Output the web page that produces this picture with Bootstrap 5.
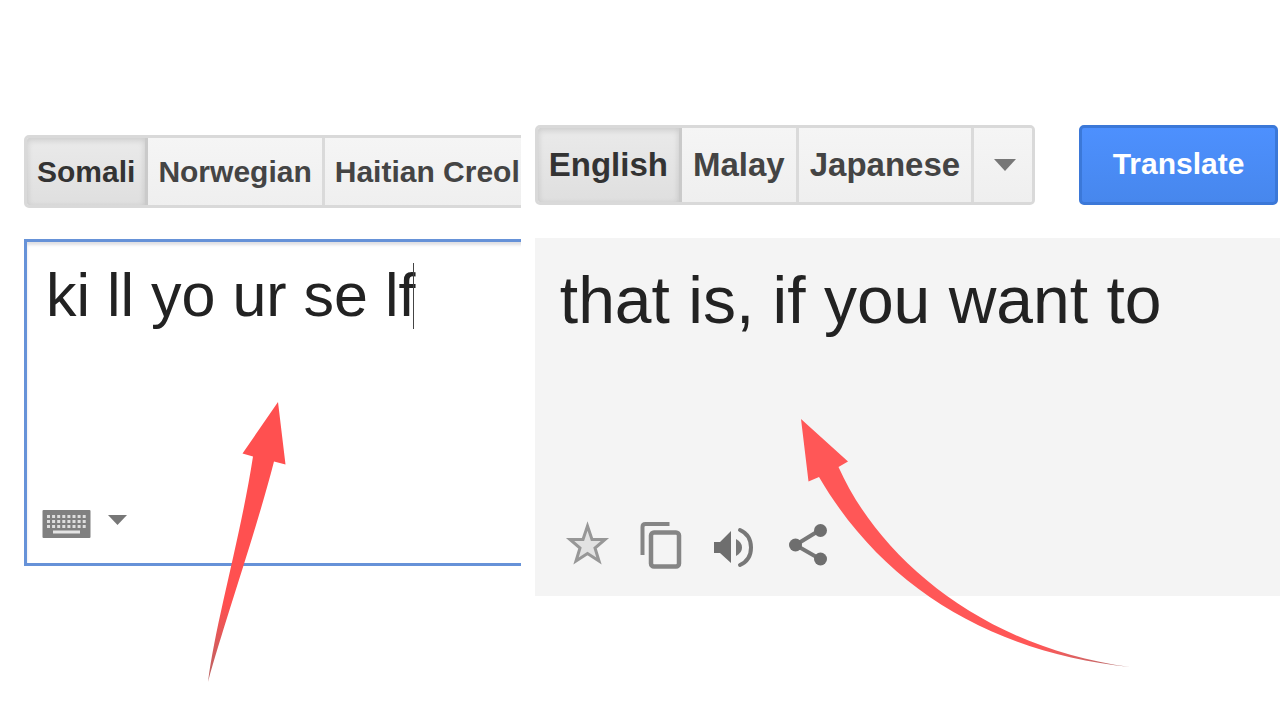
<!DOCTYPE html>
<html lang="en">
<head>
<meta charset="utf-8">
<meta name="viewport" content="width=device-width, initial-scale=1">
<title>Translate</title>
<link href="https://cdn.jsdelivr.net/npm/bootstrap@5.3.0/dist/css/bootstrap.min.css" rel="stylesheet">
<style>
  body { font-family: "Liberation Sans", Arial, sans-serif; background: #fff; }
  .source-pane { flex: 0 0 41%; padding: 135px 4px 0 24px; margin-right: 10px; min-width: 0; }
  .target-pane { padding-top: 125px; min-width: 0; }
  .clip-edge { overflow: hidden; }

  .lang-tabs { border: 3px solid #d9d9d9; border-radius: 5px; }
  .lang-tabs .btn {
    border: 0; border-right: 3px solid #dadada; border-radius: 0;
    color: #444; font-weight: 700; white-space: nowrap;
    background: linear-gradient(#f5f5f5, #efefef);
  }
  .lang-tabs .btn:last-child { border-right: 0; }
  .lang-tabs .btn.active {
    color: #333; border-right-color: #cacaca;
    background: linear-gradient(#eaeaea, #dfdfdf);
    box-shadow: inset 0 2px 6px rgba(0, 0, 0, .14);
  }
  .source-tabs { width: 600px; height: 73px; }
  .source-tabs .btn { font-size: 30px; padding: 0 10px; line-height: 67px; }
  .source-tabs .btn:last-child { flex: 1; text-align: left; }
  .target-tabs { height: 80px; }
  .target-tabs .btn { font-size: 33px; padding: 0 11px; line-height: 74px; }
  .target-tabs .more-langs { width: 58px; padding: 0; display: flex; align-items: center; justify-content: center; padding-left: 4px; }

  .translate-btn {
    width: 199px; height: 80px; font-size: 30px; font-weight: 700; color: #fff;
    border: 3px solid #3b78d8; border-radius: 5px; padding: 0 0 4px; margin-right: 2px;
    background: linear-gradient(#4d90fe, #4787ed);
  }

  .source-box { width: 600px; height: 327px; margin-top: 31px; border: 3px solid #6692d8; box-shadow: inset 0 3px 3px #e0e0e4; }
  .source-box textarea {
    border: 0; background: transparent; resize: none; outline: 0; overflow: hidden;
    font-size: 61px; line-height: 70px; color: #222; padding: 0 0 0 19px; height: 90px; margin-top: 18px;
  }
  .caret-bar { left: 386px; top: 21px; width: 1px; height: 66px; background: #444; }
  .source-tools { padding: 0 0 24px 15px; }

  .target-box { height: 358px; margin-top: 33px; background: #f4f4f4; }
  .target-box output { font-size: 66px; line-height: 76px; color: #222; padding: 24px 0 0 25px; white-space: nowrap; }
  .target-tools { padding: 0 0 25px 28px; gap: 28px; }

  .tool-btn { border: 0; background: none; padding: 0; line-height: 0; }
  .pointer-arrow { pointer-events: none; }
  .arrow-left { left: 200px; top: 400px; }
  .arrow-right { left: 255px; top: 410px; }
</style>
</head>
<body>
<main class="d-flex align-items-stretch min-vh-100">
  <section class="source-pane position-relative">
    <div class="clip-edge">
      <div class="lang-tabs source-tabs d-flex overflow-hidden" role="group" aria-label="Source language">
        <button type="button" class="btn active">Somali</button>
        <button type="button" class="btn">Norwegian</button>
        <button type="button" class="btn">Haitian Creol</button>
      </div>
      <div class="source-box position-relative d-flex flex-column justify-content-between">
        <textarea class="w-100 d-block" aria-label="Text to translate" spellcheck="false" rows="1">ki ll yo ur se lf</textarea>
        <span class="caret-bar position-absolute"></span>
        <div class="source-tools d-flex align-items-center">
          <button type="button" class="tool-btn" aria-label="Keyboard">
            <svg width="49" height="30" viewBox="0 0 49 30">
              <rect x="0.5" y="1" width="48" height="28" rx="1" fill="#808080"/>
              <path d="M5 7.500H45M5 12.500H45M5 17.500H45" stroke="#dedede" stroke-width="3" stroke-dasharray="3 2.100"/>
              <path d="M11 23H38" stroke="#e4e4e4" stroke-width="3"/>
            </svg>
          </button>
          <button type="button" class="tool-btn ms-3 pb-2" aria-label="Choose input method">
            <svg width="22" height="12" viewBox="0 0 22 12"><path d="M1 1H20L10.500 11Z" fill="#777"/></svg>
          </button>
        </div>
      </div>
    </div>
    <svg class="pointer-arrow arrow-left position-absolute" width="100" height="290" viewBox="200 400 100 290" aria-hidden="true">
      <defs>
        <linearGradient id="fadeA" x1="0" y1="0" x2="0" y2="1"><stop offset=".72" stop-color="#ff5050"/><stop offset="1" stop-color="#b86464"/></linearGradient>
      </defs>
      <path d="M278 402L285.500 464.500L274 461.500C255 535 225 620 208 682C216 620 240 540 253 456.500L242.500 453.500Z" fill="url(#fadeA)"/>
    </svg>
  </section>

  <section class="target-pane position-relative flex-grow-1">
    <div class="d-flex justify-content-between">
      <div class="lang-tabs target-tabs d-flex overflow-hidden" role="group" aria-label="Target language">
        <button type="button" class="btn active">English</button>
        <button type="button" class="btn">Malay</button>
        <button type="button" class="btn">Japanese</button>
        <button type="button" class="btn more-langs" aria-label="More languages">
          <svg width="22" height="12" viewBox="0 0 22 12"><path d="M0 0H22L11 12Z" fill="#777"/></svg>
        </button>
      </div>
      <button type="button" class="translate-btn">Translate</button>
    </div>
    <div class="target-box d-flex flex-column justify-content-between">
      <output class="d-block">that is, if you want to</output>
      <div class="target-tools d-flex align-items-center">
        <button type="button" class="tool-btn" aria-label="Save">
          <svg width="48" height="52" viewBox="563 519 48 52"><path d="M587.500 526L592 539.500L605 539.500L595 548L599 561L587.500 553.500L576 561L580 548L570 539.500L583 539.500Z" fill="#e2e2e2" stroke="#979797" stroke-width="3"/></svg>
        </button>
        <button type="button" class="tool-btn" aria-label="Copy">
          <svg width="44" height="52" viewBox="639 519 44 52"><path d="M642.500 555V527Q642.500 524 645.500 524H669.500" fill="none" stroke="#858585" stroke-width="4"/><rect x="651" y="532.500" width="28" height="34" rx="3" fill="none" stroke="#858585" stroke-width="4.500"/></svg>
        </button>
        <button type="button" class="tool-btn" aria-label="Listen">
          <svg width="44" height="52" viewBox="711 519 44 52"><path d="M714 542H720L731 531V563L720 553H714Z" fill="#6e6e6e"/><path d="M736 539Q742 542 742 547.500T736 556Z" fill="#777"/><path d="M740 530Q751 535 751 547.500T740 565" fill="none" stroke="#777" stroke-width="4" stroke-linecap="round"/></svg>
        </button>
        <button type="button" class="tool-btn" aria-label="Share">
          <svg width="44" height="52" viewBox="783 519 44 52"><path d="M820 530L795.500 545L820 559" fill="none" stroke="#777" stroke-width="4"/><g fill="#6e6e6e"><circle cx="820.500" cy="530.500" r="6.500"/><circle cx="795.500" cy="545" r="6.500"/><circle cx="820.500" cy="559" r="6.500"/></g></svg>
        </button>
      </div>
    </div>
    <svg class="pointer-arrow arrow-right position-absolute" width="350" height="270" viewBox="790 410 350 270" aria-hidden="true">
      <defs>
        <linearGradient id="fadeB" x1="0" y1="0" x2="1" y2="0"><stop offset=".72" stop-color="#ff5757"/><stop offset="1" stop-color="#b07070"/></linearGradient>
      </defs>
      <path d="M801 419L848 461.500L838.500 467C880 560 985 648 1130 667C995 653 885 590 819 477L808.500 481.500Z" fill="url(#fadeB)"/>
    </svg>
  </section>
</main>
<script src="https://cdn.jsdelivr.net/npm/bootstrap@5.3.0/dist/js/bootstrap.bundle.min.js"></script>
</body>
</html>
